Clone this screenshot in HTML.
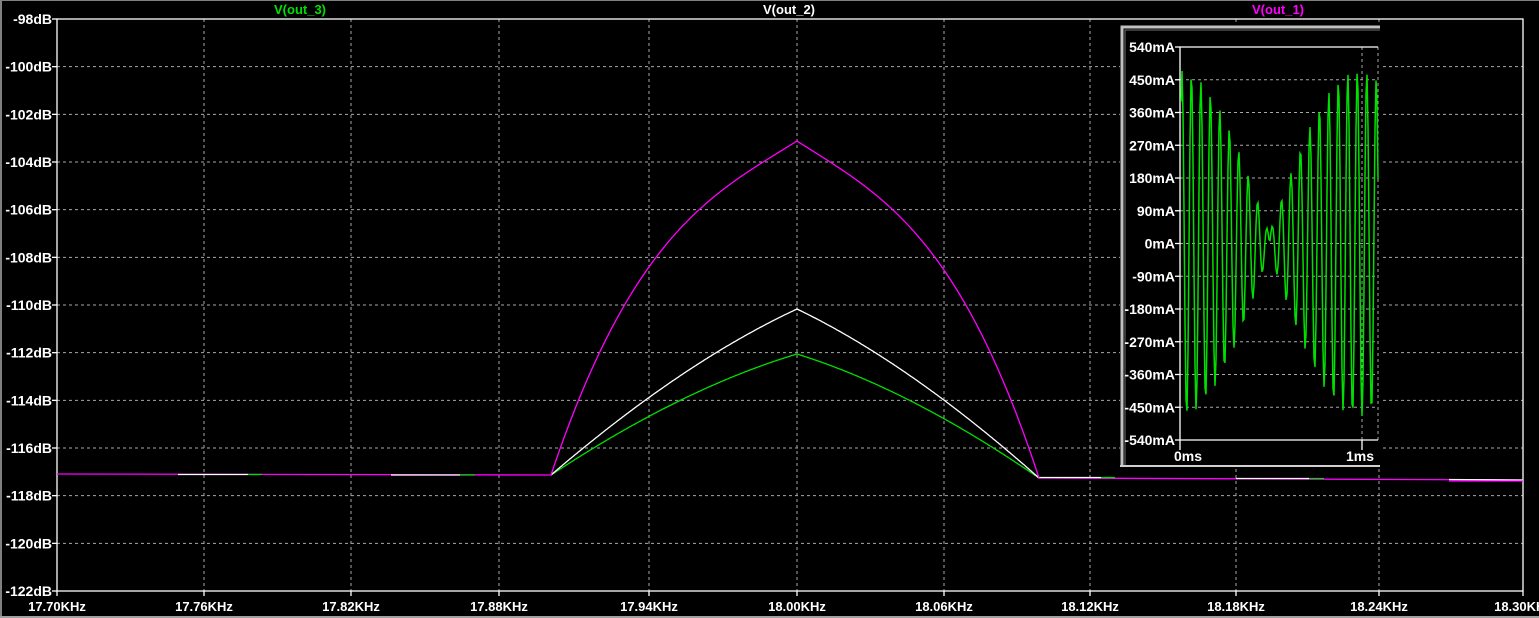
<!DOCTYPE html>
<html><head><meta charset="utf-8"><style>
html,body{margin:0;padding:0;background:#000;width:1539px;height:618px;overflow:hidden}
svg{display:block}
text{font-family:"Liberation Sans",Arial,sans-serif;font-weight:bold;font-size:13px}
.yl{font-size:14px}
</style></head><body>
<svg id="s" width="1539" height="618" xmlns="http://www.w3.org/2000/svg">
<rect width="1539" height="618" fill="#000"/>
<rect x="0" y="0" width="2" height="618" fill="#808080"/>
<rect x="0" y="0" width="1539" height="1" fill="#808080"/>
<rect x="0" y="616" width="1539" height="2" fill="#a0a0a0"/>
<g id="grid" stroke="#a8a8a8" stroke-width="1" stroke-dasharray="3,3" fill="none"></g>
<g id="frame" stroke="#fff" stroke-width="1.3" fill="none"></g>
<g id="lbl" fill="#fff"></g>
<text x="300" y="14" fill="#00e000" text-anchor="middle">V(out_3)</text>
<text x="789" y="14" fill="#fff" text-anchor="middle">V(out_2)</text>
<text x="1278" y="14" fill="#ff00ff" text-anchor="middle">V(out_1)</text>
<g id="curves" fill="none" stroke-width="1.3"></g>
<g id="inset"></g>
</svg>
<script>
const NS="http://www.w3.org/2000/svg";
function el(p,t,a,txt){const e=document.createElementNS(NS,t);for(const k in a)e.setAttribute(k,a[k]);if(txt!==undefined)e.textContent=txt;(typeof p==='string'?document.getElementById(p):p).appendChild(e);return e;}
const L=57,R=1523,T=19,B=591;
const XS=[57,204,351,499,649,797,944,1090,1236,1379,1523];
for(let i=1;i<12;i++){const y=T+(B-T)*i/12;el('grid','line',{x1:L,x2:R,y1:y,y2:y});}
for(let i=1;i<10;i++){const x=XS[i];el('grid','line',{x1:x,x2:x,y1:T,y2:B});}
el('frame','rect',{x:L,y:T,width:R-L,height:B-T});
for(let i=0;i<=12;i++){const y=T+(B-T)*i/12;el('frame','line',{x1:L-5,x2:L,y1:y,y2:y});
 el('lbl','text',{x:L-5,y:y+5,'text-anchor':'end','class':'yl'},(-98-2*i)+'dB');}
for(let i=0;i<=10;i++){const x=XS[i];el('frame','line',{x1:x,x2:x,y1:B,y2:B+5});
 el('lbl','text',{x:x,y:611,'text-anchor':'middle'},(17.70+0.06*i).toFixed(2)+'KHz');}
function peak(py,a,b,c){let d='';const cx=797,x0=551,x1=1039,y0=475,y1=478;
 for(let x=x0;x<=x1;x+=1){let f,yb;if(x<=cx){f=(cx-x)/(cx-x0);yb=y0;}else{f=(x-cx)/(x1-cx);yb=y1;}
 let h=1-a*f-b*f*f-c*f*f*f; if(h<0)h=0;
 const y=yb-(yb-py)*h;d+=(d?'L':'M')+x+','+y.toFixed(1);}return d;}
el('curves','path',{d:'M57,474L551,475M1039,478L1523,480',stroke:'#ff00ff'});
el('curves','path',{d:'M178,474.5L248,474.5M391,475L460,475M1039,477.5L1101,477.5M1236,478.5L1309,478.5M1449,479.5L1523,480',stroke:'#fff'});
el('curves','path',{d:'M248,474.5L262,474.5M460,475L475,475M1101,477.5L1115,477.5M1309,478.5L1324,478.5',stroke:'#00e000'});
el('curves','path',{d:'M1449,481L1523,481',stroke:'#ff00ff'});
el('curves','path',{d:peak(354,0.61,0.44,-0.05),stroke:'#00e000'});
el('curves','path',{d:peak(309,0.69,0.35,-0.04),stroke:'#fff'});
el('curves','path',{d:peak(141,0.46,-0.12,0.66),stroke:'#ff00ff'});
const ins=document.getElementById('inset');
el(ins,'rect',{x:1120,y:25,width:260,height:443,fill:'#000'});
el(ins,'path',{d:'M1122,467L1122,27L1380,27',stroke:'#c0c0c0','stroke-width':3,fill:'none'});
el(ins,'path',{d:'M1125,465L1125,30L1380,30',stroke:'#707070','stroke-width':1,fill:'none'});
el(ins,'line',{x1:1120,x2:1380,y1:466,y2:466,stroke:'#d0d0d0','stroke-width':2});
const IL=1180,IR=1378,IT=47,IB=440;
const g=el(ins,'g',{stroke:'#a8a8a8','stroke-dasharray':'3,3',fill:'none'});
for(let i=1;i<12;i++){const y=IT+(IB-IT)*i/12;el(g,'line',{x1:IL,x2:IR,y1:y,y2:y});}
el(g,'line',{x1:1362,x2:1362,y1:IT,y2:IB});
el(g,'line',{x1:IR,x2:IR,y1:IT,y2:IB});
const f=el(ins,'g',{stroke:'#fff','stroke-width':1.3,fill:'none'});
el(f,'path',{d:`M${IR},${IT}L${IL},${IT}L${IL},${IB+10}M${IL},${IB}L${IR},${IB}M1362,${IB}L1362,${IB+10}`});
for(let i=0;i<=12;i++){const y=IT+(IB-IT)*i/12;el(f,'line',{x1:IL-5,x2:IL,y1:y,y2:y});
 el(ins,'text',{x:IL-5,y:y+5,'text-anchor':'end',fill:'#fff','class':'yl'},(540-90*i)+'mA');}
el(ins,'text',{x:1188,y:461,'text-anchor':'middle',fill:'#fff','class':'yl'},'0ms');
el(ins,'text',{x:1360,y:461,'text-anchor':'middle',fill:'#fff','class':'yl'},'1ms');
let d='';const cy=IT+(IB-IT)/2,sc=(IB-IT)/1080;
for(let x=IL+1;x<=IR;x+=1){const t=(x-IL)/182;
 const env=450*Math.abs(Math.cos(Math.PI*t*1.02))+25;
 const v=env*Math.sin(2*Math.PI*t*19.2+0.3)*Math.sign(Math.cos(Math.PI*t*1.02));
 d+=(d?'L':'M')+x+','+(cy-v*sc).toFixed(1);}
el(ins,'path',{d:d,stroke:'#00e000','stroke-width':1.5,fill:'none'});
</script>
</body></html>
